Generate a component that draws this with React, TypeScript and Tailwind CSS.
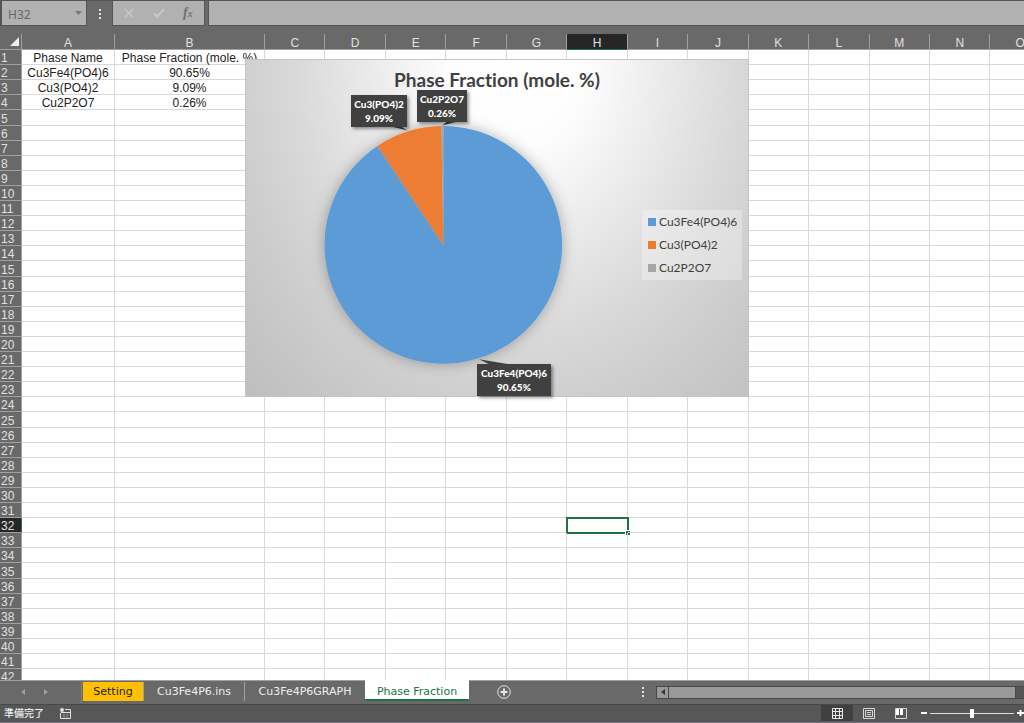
import { useState } from "react";
import type { ReactNode } from "react";
import clsx from "clsx";

const COLUMNS = ["A", "B", "C", "D", "E", "F", "G", "H", "I", "J", "K", "L", "M", "N", "O"];
const ROWS = Array.from({ length: 42 }, (_, i) => i + 1);

const CELLS: Record<string, string> = {
  A1: "Phase Name",
  B1: "Phase Fraction (mole. %)",
  A2: "Cu3Fe4(PO4)6",
  B2: "90.65%",
  A3: "Cu3(PO4)2",
  B3: "9.09%",
  A4: "Cu2P2O7",
  B4: "0.26%",
};

const PHASES = [
  { name: "Cu3Fe4(PO4)6", value: 90.65, fill: "#5b9bd5" },
  { name: "Cu3(PO4)2", value: 9.09, fill: "#ed7d31" },
  { name: "Cu2P2O7", value: 0.26, fill: "#a5a5a5" },
];

const ACTIVE_COLUMN = "H";
const ACTIVE_ROW = 32;

const CX = 198;
const CY = 186;
const R = 119.5;

function slicePath(from: number, to: number) {
  const point = (pct: number) => {
    const a = (pct / 100) * Math.PI * 2;
    return `${CX + R * Math.sin(a)} ${CY - R * Math.cos(a)}`;
  };
  return `M${CX} ${CY}L${point(from)}A${R} ${R} 0 ${to - from > 50 ? 1 : 0} 1 ${point(to)}Z`;
}

function FormulaBar() {
  return (
    <div className="flex h-[26px] shrink-0 items-stretch border-t border-[#555] bg-[#696969]">
      <div className="flex w-[87px] items-center border border-t-0 border-l-2 border-[#555] bg-[#b1b1b1]">
        <input
          aria-label="Name box"
          defaultValue="H32"
          className="w-full min-w-0 flex-1 bg-transparent pt-1 pl-1.5 font-['Noto_Sans'] text-xs text-[#666] outline-none"
        />
        <button aria-label="Open name list" className="flex h-full w-4 items-center justify-center">
          <svg width="7" height="4" viewBox="0 0 7 4">
            <path d="M0 0h7L3.5 4z" fill="#777" />
          </svg>
        </button>
      </div>
      <div className="flex w-[25px] items-center justify-center">
        <Dots />
      </div>
      <div className="flex w-[93px] items-center justify-around border border-t-0 border-[#555] bg-[#b1b1b1] px-0.5">
        <button aria-label="Cancel">
          <svg width="10" height="10" viewBox="0 0 10 10" fill="none" stroke="#c8c8c8" strokeWidth="1.6">
            <path d="M1 1l8 8M9 1L1 9" />
          </svg>
        </button>
        <button aria-label="Enter">
          <svg width="12" height="10" viewBox="0 0 12 10" fill="none" stroke="#c8c8c8" strokeWidth="2">
            <path d="M1 5.5l3 3L11 1" />
          </svg>
        </button>
        <button aria-label="Insert function" className="font-['Liberation_Serif'] text-sm leading-none font-bold text-[#707070] italic">
          f<span className="text-[10px]">x</span>
        </button>
      </div>
      <input
        aria-label="Formula"
        className="ml-[3px] min-w-0 flex-1 border border-t-0 border-r-0 border-[#555] bg-[#b1b1b1] px-2 text-xs outline-none"
      />
    </div>
  );
}

function Dots() {
  return (
    <svg width="2" height="10" viewBox="0 0 2 10" fill="#e6e6e6">
      <path d="M0 0h2v2H0zM0 4h2v2H0zM0 8h2v2H0z" />
    </svg>
  );
}

function Sheet() {
  return (
    <table className="w-[1051px] table-fixed border-separate border-spacing-0 text-center font-['Liberation_Sans'] text-xs leading-3 text-[#222]">
      <colgroup>
        <col className="w-[22px]" />
        {COLUMNS.map((c) => (
          <col key={c} className={clsx(c === "A" && "w-[93px]", c === "B" && "w-[150px]")} />
        ))}
      </colgroup>
      <thead>
        <tr className="h-4 bg-[#696969] text-[#e0e0e0]">
          <th aria-label="Select all" className="border-r border-b border-[#a0a0a0] p-0">
            <svg width="9" height="9" viewBox="0 0 9 9" className="mr-0.5 ml-auto">
              <path d="M9 0v9H0z" fill="#f0f0f0" />
            </svg>
          </th>
          {COLUMNS.map((c) => (
            <th
              key={c}
              scope="col"
              className={clsx(
                "border-r border-b p-0 pt-[3px] font-normal",
                c === ACTIVE_COLUMN ? "border-r-[#a0a0a0] border-b-[#217346] bg-[#262626]" : "border-[#a0a0a0]",
              )}
            >
              {c}
            </th>
          ))}
        </tr>
      </thead>
      <tbody>
        {ROWS.map((r) => (
          <tr key={r} className={r % 10 === 5 ? "h-4" : "h-[15px]"}>
            <th
              scope="row"
              className={clsx(
                "border-r border-b border-b-[#a0a0a0] p-0 pt-0.5 pl-px text-left font-normal text-[#e0e0e0]",
                r === ACTIVE_ROW ? "border-r-[#217346] bg-[#262626]" : "border-r-[#a0a0a0] bg-[#696969]",
              )}
            >
              {r}
            </th>
            {COLUMNS.map((c) => (
              <td key={c} className="relative border-r border-b border-[#d9d9d9] p-0 pt-0.5 whitespace-nowrap">
                {CELLS[`${c}${r}`]}
                {c === ACTIVE_COLUMN && r === ACTIVE_ROW && (
                  <span className="absolute -top-px -right-0.5 -bottom-0.5 -left-px border-2 border-[#217346]">
                    <span className="absolute -right-[3px] -bottom-[3px] size-[5px] border-t border-l border-white bg-[#217346]" />
                  </span>
                )}
              </td>
            ))}
          </tr>
        ))}
      </tbody>
    </table>
  );
}

function Callout({ className, children }: { className: string; children: ReactNode }) {
  return (
    <div
      className={clsx(
        "absolute flex flex-col items-center justify-center bg-[#404040] text-[10px] leading-[14px] font-black text-white shadow-[2px_2px_3px_rgba(0,0,0,0.4)]",
        className,
      )}
    >
      {children}
    </div>
  );
}

function PhaseChart() {
  let start = 0;
  return (
    <figure className="absolute top-[25px] left-[245px] h-[338px] w-[504px] border border-[#c4c4c4] bg-[radial-gradient(ellipse_at_54%_0%,#ffffff_0%,#fdfdfd_18%,#e9e9e9_40%,#d9d9d9_58%,#cccccc_76%,#bebebe_100%)] font-['Lato'] text-[#404040] [font-variant-ligatures:none]">
      <figcaption className="pt-2 text-center text-[19px] leading-6 font-bold">Phase Fraction (mole. %)</figcaption>
      <svg className="absolute inset-0 size-full" viewBox="0 0 504 338" role="img" aria-label="Phase fraction pie chart">
        <defs>
          <filter id="pieShadow" x="-20%" y="-20%" width="140%" height="140%">
            <feDropShadow dx="0" dy="0" stdDeviation="7" floodColor="#000" floodOpacity="0.3" />
          </filter>
        </defs>
        <g filter="url(#pieShadow)">
          {PHASES.map((p) => {
            const d = slicePath(start, start + p.value);
            start += p.value;
            return <path key={p.name} d={d} fill={p.fill} />;
          })}
        </g>
        <path d="M137 65l25 6-10-6zM204 60l-7 6 22-6zM234 301l30 5-20 0z" fill="#404040" />
      </svg>
      <Callout className="top-[35px] left-[105px] h-8 w-14">
        <span>Cu3(PO4)2</span>
        <span>9.09%</span>
      </Callout>
      <Callout className="top-[30px] left-[171px] h-8 w-[50px]">
        <span>Cu2P2O7</span>
        <span>0.26%</span>
      </Callout>
      <Callout className="top-[304px] left-[231px] h-8 w-[74px]">
        <span>Cu3Fe4(PO4)6</span>
        <span>90.65%</span>
      </Callout>
      <ul className="absolute top-[150px] right-1.5 flex h-[70px] w-[100px] flex-col justify-around bg-white/30 pl-1.5 text-xs leading-5">
        {PHASES.map((p) => (
          <li key={p.name} className="flex items-center gap-[3px]">
            <svg width="8" height="8" viewBox="0 0 8 8" className="shrink-0">
              <path d="M0 0h8v8H0z" fill={p.fill} />
            </svg>
            {p.name}
          </li>
        ))}
      </ul>
    </figure>
  );
}

function TabBar() {
  const [tab, setTab] = useState("Phase Fraction");
  return (
    <nav className="flex h-6 shrink-0 items-start bg-[#696969] font-['DejaVu_Sans'] text-[11px] text-[#eee] shadow-[inset_0_1px_#a0a0a0]">
      <div className="flex h-[23px] w-[82px] items-center gap-[19px] border-r border-[#808080] pl-[21px]">
        <button aria-label="Previous sheet">
          <svg width="4" height="6" viewBox="0 0 4 6">
            <path d="M4 0v6L0 3z" fill="#a0a0a0" />
          </svg>
        </button>
        <button aria-label="Next sheet">
          <svg width="4" height="6" viewBox="0 0 4 6">
            <path d="M0 0v6l4-3z" fill="#a0a0a0" />
          </svg>
        </button>
      </div>
      <div className="flex h-[21px] items-stretch">
        <button
          onClick={() => setTab("Setting")}
          className="mt-0.5 ml-px w-[61px] border-r border-[#a0a0a0] bg-[#ffc000] pt-0.5 text-[#222]"
        >
          Setting
        </button>
        <button onClick={() => setTab("Cu3Fe4P6.ins")} className="mt-0.5 w-[101px] border-r border-[#a0a0a0] pt-0.5">
          Cu3Fe4P6.ins
        </button>
        <button onClick={() => setTab("Cu3Fe4P6GRAPH")} className="mt-0.5 w-[120px] pt-0.5">
          Cu3Fe4P6GRAPH
        </button>
        <button
          aria-current={tab === "Phase Fraction"}
          onClick={() => setTab("Phase Fraction")}
          className="w-[104px] border-b-2 border-[#217346] bg-white pt-1 text-[#217346]"
        >
          Phase Fraction
        </button>
      </div>
      <button aria-label="New sheet" className="ml-7 flex h-6 items-center">
        <svg width="14" height="14" viewBox="0 0 14 14" fill="none" stroke="#e6e6e6">
          <circle cx="7" cy="7" r="6.3" />
          <path d="M7 3.5v7M3.5 7h7" strokeWidth="2" />
        </svg>
      </button>
      <div className="ml-auto flex h-6 w-[382px] items-center">
        <Dots />
        <div className="ml-3 flex h-[13px] flex-1 border border-r-0 border-[#484848] bg-[#555]">
          <button aria-label="Scroll left" className="flex w-3 items-center justify-center border-r border-[#484848] bg-[#999]">
            <svg width="4" height="6" viewBox="0 0 4 6">
              <path d="M4 0v6L0 3z" fill="#333" />
            </svg>
          </button>
          <div className="mr-2 flex-1 border-r border-[#484848] bg-[#999]" />
        </div>
      </div>
    </nav>
  );
}

function StatusBar() {
  return (
    <footer className="flex h-[19px] shrink-0 items-center border-t border-b border-t-[#484848] border-b-[#77757c] bg-[#575757] font-['Noto_Sans_CJK_JP',sans-serif] text-[10px] leading-4 text-[#eee]">
      <span className="pb-0.5 pl-1 font-medium">準備完了</span>
      <button aria-label="Record macro" className="ml-4">
        <svg width="11" height="11" viewBox="0 0 11 11" fill="none" stroke="#e0e0e0">
          <path d="M5 1.5h5.5v9H.5V5M1 4.5h9M3.5 7h1M6.5 7h1M3.5 9h1M6.5 9h1" />
          <circle cx="2" cy="2" r="2" fill="#e0e0e0" stroke="none" />
        </svg>
      </button>
      <div className="ml-auto flex h-full items-stretch pb-px">
        <button aria-label="Normal view" className="flex w-8 items-center justify-center bg-[#404040]">
          <svg width="11" height="11" viewBox="0 0 11 11" fill="none" stroke="#e6e6e6">
            <path d="M.5.5h10v10H.5zM.5 3.5h10M.5 7.5h10M3.5.5v10M7.5.5v10" />
          </svg>
        </button>
        <button aria-label="Page layout" className="flex w-8 items-center justify-center">
          <svg width="12" height="11" viewBox="0 0 12 11" fill="none" stroke="#d6d6d6">
            <path d="M.5.5h11v10H.5zM2.5 2.5h7v6h-7zM4 4.5h4M4 6.5h4" />
          </svg>
        </button>
        <button aria-label="Page break preview" className="flex w-8 items-center justify-center">
          <svg width="12" height="11" viewBox="0 0 12 11" fill="none" stroke="#d6d6d6">
            <path d="M.5.5h11v10H.5z" />
            <path d="M1 1h3v6H1zM5 1h3v6H5z" fill="#fff" stroke="none" />
          </svg>
        </button>
        <button aria-label="Zoom out" className="flex w-2.5 items-center justify-end">
          <svg width="6" height="2" viewBox="0 0 6 2">
            <path d="M0 0h6v2H0z" fill="#fff" />
          </svg>
        </button>
        <div className="flex items-center px-[3px]">
          <input
            type="range"
            aria-label="Zoom"
            defaultValue={50}
            className="h-[9px] w-[84px] appearance-none bg-[linear-gradient(#ddd,#ddd)] bg-[length:100%_1px] bg-center bg-no-repeat [&::-webkit-slider-thumb]:h-[9px] [&::-webkit-slider-thumb]:w-1 [&::-webkit-slider-thumb]:appearance-none [&::-webkit-slider-thumb]:bg-white"
          />
        </div>
        <button aria-label="Zoom in" className="flex w-[7px] items-center justify-end">
          <svg width="7" height="6" viewBox="0 0 7 6">
            <path d="M2.5 0h2v6h-2zM0 2h7v2H0z" fill="#fff" />
          </svg>
        </button>
      </div>
    </footer>
  );
}

export default function App() {
  return (
    <div className="flex h-screen flex-col overflow-hidden bg-[#696969]">
      <FormulaBar />
      <main className="relative mt-2 min-h-0 flex-1 overflow-hidden bg-white">
        <Sheet />
        <PhaseChart />
      </main>
      <TabBar />
      <StatusBar />
    </div>
  );
}
